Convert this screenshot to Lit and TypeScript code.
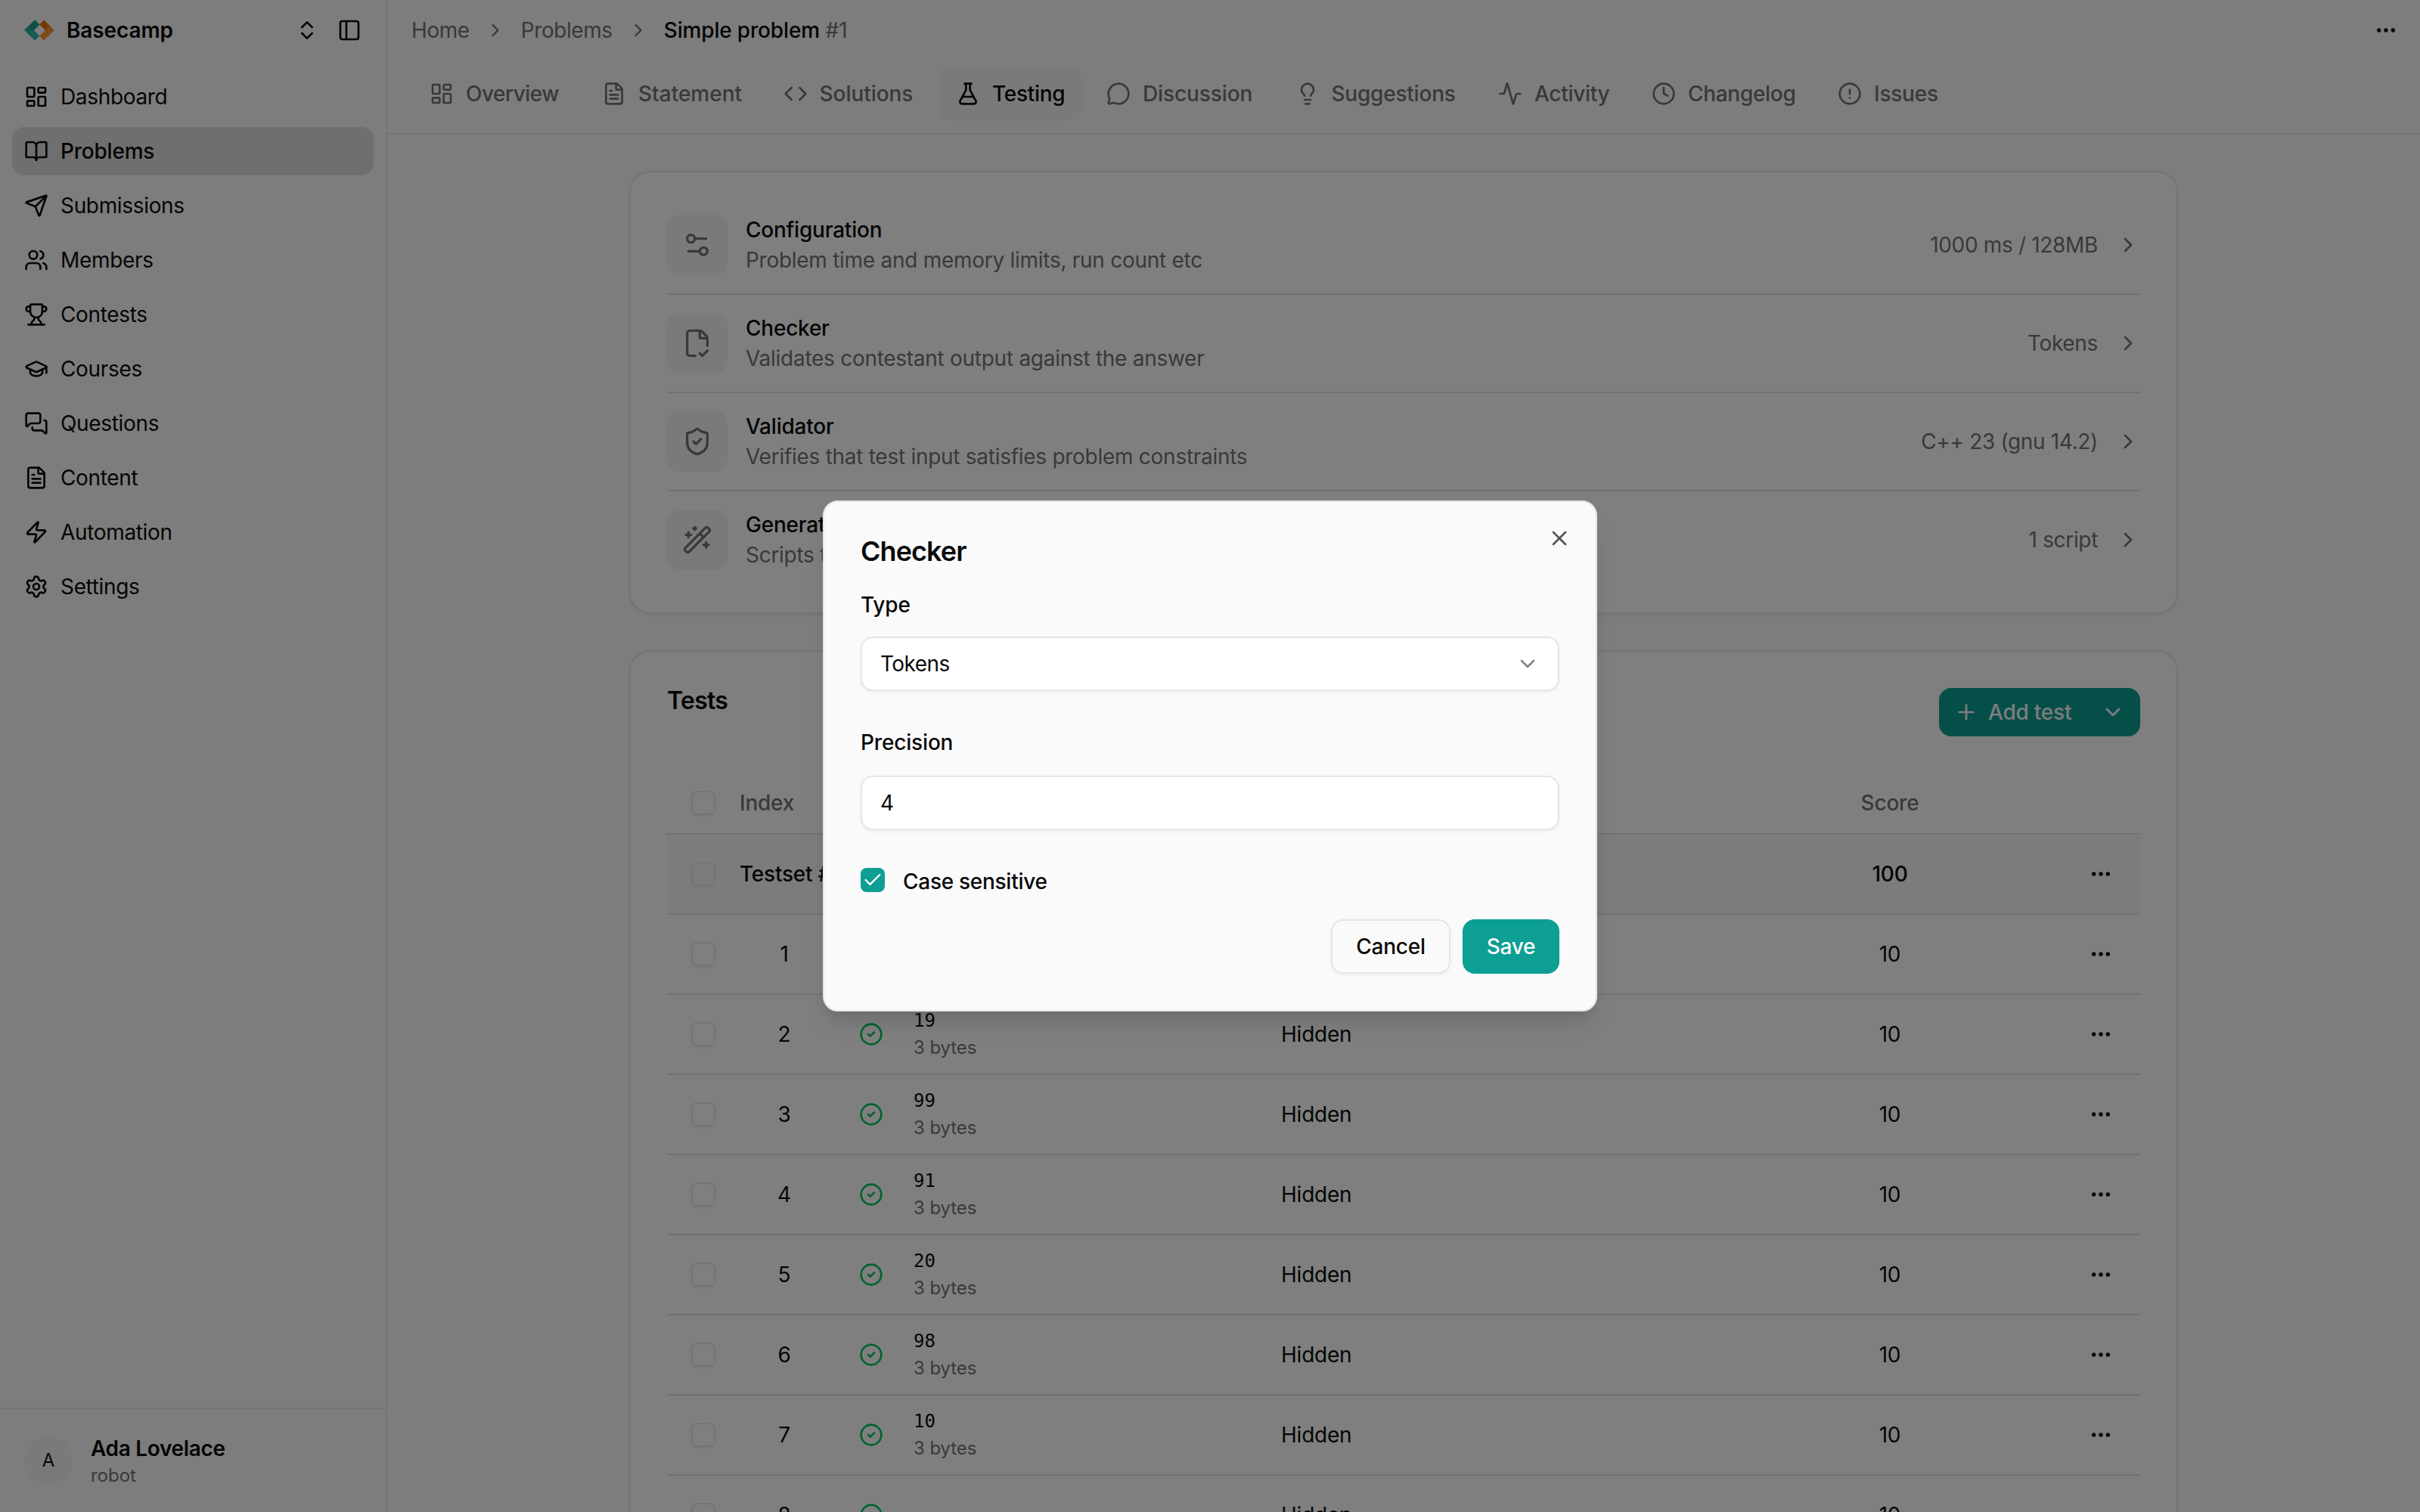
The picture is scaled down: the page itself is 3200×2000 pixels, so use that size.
import { LitElement, html, svg, css, nothing } from "lit";
import { customElement, property } from "lit/decorators.js";
import { classMap } from "lit/directives/class-map.js";

type Shape = string | [number, number, number] | [number, number, number, number, number];

/* A string is a path, three numbers a circle (cx, cy, r), five a rect (x, y, w, h, rx). */
const ICONS: Record<string, Shape[]> = {
  dashboard: [[3, 3, 7, 9, 1], [14, 3, 7, 5, 1], [14, 12, 7, 9, 1], [3, 16, 7, 5, 1]],
  book: ["M12 7v14", "M3 18a1 1 0 0 1-1-1V4a1 1 0 0 1 1-1h5a4 4 0 0 1 4 4 4 4 0 0 1 4-4h5a1 1 0 0 1 1 1v13a1 1 0 0 1-1 1h-6a3 3 0 0 0-3 3 3 3 0 0 0-3-3z"],
  send: ["M14.536 21.686a.5.5 0 0 0 .937-.024l6.5-19a.496.496 0 0 0-.635-.635l-19 6.5a.5.5 0 0 0-.024.937l7.93 3.18a2 2 0 0 1 1.112 1.11z", "m21.854 2.147-10.94 10.939"],
  users: ["M16 21v-2a4 4 0 0 0-4-4H6a4 4 0 0 0-4 4v2", "M16 3.128a4 4 0 0 1 0 7.744", "M22 21v-2a4 4 0 0 0-3-3.87", [9, 7, 4]],
  trophy: ["M10 14.66v1.626a2 2 0 0 1-.976 1.696A5 5 0 0 0 7 21.978", "M14 14.66v1.626a2 2 0 0 0 .976 1.696A5 5 0 0 1 17 21.978", "M18 9h1.5a1 1 0 0 0 0-5H18", "M4 22h16", "M6 9a6 6 0 0 0 12 0V3a1 1 0 0 0-1-1H7a1 1 0 0 0-1 1z", "M6 9H4.5a1 1 0 0 1 0-5H6"],
  cap: ["M21.42 10.922a1 1 0 0 0-.019-1.838L12.83 5.18a2 2 0 0 0-1.66 0L2.6 9.08a1 1 0 0 0 0 1.832l8.57 3.908a2 2 0 0 0 1.66 0z", "M22 10v6", "M6 12.5V16a6 3 0 0 0 12 0v-3.5"],
  messages: ["M16 10a2 2 0 0 1-2 2H6.828a2 2 0 0 0-1.414.586l-2.202 2.202A.71.71 0 0 1 2 14.286V4a2 2 0 0 1 2-2h10a2 2 0 0 1 2 2z", "M20 9a2 2 0 0 1 2 2v10.286a.71.71 0 0 1-1.212.502l-2.202-2.202A2 2 0 0 0 17.172 19H10a2 2 0 0 1-2-2v-1"],
  file: ["M6 22a2 2 0 0 1-2-2V4a2 2 0 0 1 2-2h8a2.4 2.4 0 0 1 1.704.706l3.588 3.588A2.4 2.4 0 0 1 20 8v12a2 2 0 0 1-2 2z", "M14 2v5a1 1 0 0 0 1 1h5", "M10 9H8", "M16 13H8", "M16 17H8"],
  zap: ["M4 14a1 1 0 0 1-.78-1.63l9.9-10.2a.5.5 0 0 1 .86.46l-1.92 6.02A1 1 0 0 0 13 10h7a1 1 0 0 1 .78 1.63l-9.9 10.2a.5.5 0 0 1-.86-.46l1.92-6.02A1 1 0 0 0 11 14z"],
  settings: ["M9.671 4.136a2.34 2.34 0 0 1 4.659 0 2.34 2.34 0 0 0 3.319 1.915 2.34 2.34 0 0 1 2.33 4.033 2.34 2.34 0 0 0 0 3.831 2.34 2.34 0 0 1-2.33 4.033 2.34 2.34 0 0 0-3.319 1.915 2.34 2.34 0 0 1-4.659 0 2.34 2.34 0 0 0-3.32-1.915 2.34 2.34 0 0 1-2.33-4.033 2.34 2.34 0 0 0 0-3.831A2.34 2.34 0 0 1 6.35 6.051a2.34 2.34 0 0 0 3.319-1.915", [12, 12, 3]],
  updown: ["m7 15 5 5 5-5", "m7 9 5-5 5 5"],
  panel: [[3, 3, 18, 18, 2], "M9 3v18"],
  right: ["m9 18 6-6-6-6"],
  down: ["m6 9 6 6 6-6"],
  code: ["m16 18 6-6-6-6", "m8 6-6 6 6 6"],
  flask: ["M14 2v6a2 2 0 0 0 .245.96l5.51 10.08A2 2 0 0 1 18 22H6a2 2 0 0 1-1.755-2.96l5.51-10.08A2 2 0 0 0 10 8V2", "M6.453 15h11.094", "M8.5 2h7"],
  bubble: ["M2.992 16.342a2 2 0 0 1 .094 1.167l-1.065 3.29a1 1 0 0 0 1.236 1.168l3.413-.998a2 2 0 0 1 1.099.092 10 10 0 1 0-4.777-4.719"],
  bulb: ["M15 14c.2-1 .7-1.7 1.5-2.5 1-.9 1.5-2.2 1.5-3.5A6 6 0 0 0 6 8c0 1 .2 2.2 1.5 3.5.7.7 1.3 1.5 1.5 2.5", "M9 18h6", "M10 22h4"],
  activity: ["M22 12h-2.48a2 2 0 0 0-1.93 1.46l-2.35 8.36a.25.25 0 0 1-.48 0L9.24 2.18a.25.25 0 0 0-.48 0l-2.35 8.36A2 2 0 0 1 4.49 12H2"],
  clock: [[12, 12, 10], "M12 6v6l4 2"],
  alert: [[12, 12, 10], "M12 8v4", "M12 16h.01"],
  sliders: ["M14 17H5", "M19 7h-9", [17, 17, 3], [7, 7, 3]],
  filecheck: ["M10.5 22H6a2 2 0 0 1-2-2V4a2 2 0 0 1 2-2h8a2.4 2.4 0 0 1 1.706.706l3.588 3.588A2.4 2.4 0 0 1 20 8v6", "M14 2v5a1 1 0 0 0 1 1h5", "m14 20 2 2 4-4"],
  shield: ["M20 13c0 5-3.5 7.5-7.66 8.95a1 1 0 0 1-.67-.01C7.5 20.5 4 18 4 13V6a1 1 0 0 1 1-1c2 0 4.5-1.2 6.24-2.72a1.17 1.17 0 0 1 1.52 0C14.51 3.81 17 5 19 5a1 1 0 0 1 1 1z", "m9 12 2 2 4-4"],
  wand: ["m21.64 3.64-1.28-1.28a1.21 1.21 0 0 0-1.72 0L2.36 18.64a1.21 1.21 0 0 0 0 1.72l1.28 1.28a1.2 1.2 0 0 0 1.72 0L21.64 5.36a1.2 1.2 0 0 0 0-1.72", "m14 7 3 3", "M5 6v4", "M19 14v4", "M10 2v2", "M7 8H3", "M21 16h-4", "M11 3H9"],
  plus: ["M5 12h14", "M12 5v14"],
  dots: [[12, 12, 1], [19, 12, 1], [5, 12, 1]],
  ok: [[12, 12, 10], "m9 12 2 2 4-4"],
  check: ["M20 6 9 17l-5-5"],
  close: ["M18 6 6 18", "m6 6 12 12"],
};

@customElement("ui-icon")
export class UiIcon extends LitElement {
  @property() name = "";
  static styles = css`
    :host { display: block; flex: none; width: 32px; height: 32px; }
    svg { display: block; width: 100%; height: 100%; }
  `;
  render() {
    return html`<svg viewBox="0 0 24 24" fill="none" stroke="currentColor" stroke-width="2" stroke-linecap="round" stroke-linejoin="round">
      ${(ICONS[this.name] ?? []).map((s) =>
        typeof s === "string"
          ? svg`<path d=${s}></path>`
          : s.length === 3
            ? svg`<circle cx=${s[0]} cy=${s[1]} r=${s[2]}></circle>`
            : svg`<rect x=${s[0]} y=${s[1]} width=${s[2]} height=${s[3]} rx=${s[4]}></rect>`
      )}
    </svg>`;
  }
}

const NAV = [
  ["dashboard", "Dashboard"], ["book", "Problems"], ["send", "Submissions"], ["users", "Members"],
  ["trophy", "Contests"], ["cap", "Courses"], ["messages", "Questions"], ["file", "Content"],
  ["zap", "Automation"], ["settings", "Settings"],
];

/* icon, label, label width, tracking in em */
const TABS: [string, string, number, number][] = [
  ["dashboard", "Overview", 124, -0.018], ["file", "Statement", 135.5, 0], ["code", "Solutions", 124.5, -0.002],
  ["flask", "Testing", 95, -0.011], ["bubble", "Discussion", 145.5, -0.004], ["bulb", "Suggestions", 164.5, -0.008],
  ["activity", "Activity", 99, -0.011], ["clock", "Changelog", 142, -0.011], ["alert", "Issues", 86, -0.008],
];

const SETTINGS = [
  ["sliders", "Configuration", "Problem time and memory limits, run count etc", "1000 ms / 128MB"],
  ["filecheck", "Checker", "Validates contestant output against the answer", "Tokens"],
  ["shield", "Validator", "Verifies that test input satisfies problem constraints", "C++ 23 (gnu 14.2)"],
  ["wand", "Generators", "Scripts that generate tests", "1 script"],
];

/* First line of each test; null while it has none to show. */
const TESTS: (string | null)[] = [null, "19", "99", "91", "20", "98", "10", ""];

@customElement("app-root")
export class AppRoot extends LitElement {
  static styles = css`
    :host {
      display: block; position: relative; width: 3200px; height: 2000px; overflow: hidden;
      font: 400 28px/40px Inter, "Liberation Sans", sans-serif; letter-spacing: -0.008em;
      color: #0a0a0a; background: #fafafa;
    }
    * { box-sizing: border-box; }
    .shell { display: flex; height: 2000px; }

    .side { width: 512px; flex: none; border-right: 2px solid #ebebeb; display: flex; flex-direction: column; }
    .brand { height: 80px; padding: 0 32px; display: flex; align-items: center; flex: none; }
    .logo { width: 40px; height: 28px; display: block; }
    .brand-name { font-weight: 600; margin-left: 16px; flex: 1; letter-spacing: -0.004em; }
    .toggle { margin-left: 24px; }
    .nav { flex: 1; padding: 16px; display: flex; flex-direction: column; gap: 8px; letter-spacing: -0.012em; }
    .item { height: 64px; padding: 0 16px; display: flex; align-items: center; gap: 16px; border-radius: 16px; }
    .item.on { background: #dedede; font-weight: 500; letter-spacing: -0.008em; }
    .user { height: 138px; border-top: 2px solid #ebebeb; padding: 0 32px; display: flex; align-items: center; gap: 24px; flex: none; }
    .avatar { width: 64px; height: 64px; border-radius: 50%; background: #f5f5f5; font-size: 24px; display: flex; align-items: center; justify-content: center; }
    .who { line-height: 36px; padding-top: 4px; }
    .who-name { font-weight: 600; letter-spacing: -0.012em; }
    .who-role { font-size: 24px; color: #737373; letter-spacing: -0.001em; }

    .main { flex: 1; min-width: 0; display: flex; flex-direction: column; }
    .top { height: 178px; flex: none; border-bottom: 2px solid #e8e8e8; display: flex; flex-direction: column; }
    .crumbs { height: 80px; padding: 0 29px 0 32px; display: flex; align-items: center; gap: 20px; color: #737373; letter-spacing: -0.015em; }
    .crumbs .sep { width: 28px; height: 28px; }
    .here { flex: 1; white-space: pre; letter-spacing: -0.006em; }
    .here b { font-weight: 500; color: #0a0a0a; }
    .more { color: #0a0a0a; }
    .tabs { padding: 8px 32px 0; display: flex; gap: 8px; }
    .tab { height: 72px; padding: 0 24px; display: flex; align-items: center; gap: 16px; border-radius: 16px; color: #737373; font-weight: 500; white-space: nowrap; }
    .tab.on { background: #f5f5f5; color: #0a0a0a; }

    .body { width: 2048px; margin: 48px auto 0; display: flex; flex-direction: column; gap: 48px; }
    .card { background: #fff; border: 2px solid #e8e8e8; border-radius: 28px; box-shadow: 0 2px 4px rgba(0, 0, 0, 0.06); flex: none; }
    .settings { padding: 32px 48px; }
    .setting { height: 130px; border-bottom: 2px solid #e5e5e5; display: flex; align-items: center; gap: 24px; }
    .setting:last-child { height: 128px; border-bottom: 0; }
    .tile { width: 80px; height: 80px; border-radius: 16px; background: #f5f5f5; color: #737373; display: flex; align-items: center; justify-content: center; }
    .tile ui-icon { width: 40px; height: 40px; }
    .about { flex: 1; }
    .name { font-weight: 500; letter-spacing: -0.008em; }
    .muted { color: #737373; letter-spacing: -0.0098em; }
    .setting > .muted { letter-spacing: -0.012em; }
    .setting > ui-icon { color: #737373; }

    .tests { padding: 48px; }
    .head { height: 64px; display: flex; justify-content: space-between; margin-bottom: 48px; }
    .head-title { font-size: 32px; line-height: 34px; font-weight: 600; letter-spacing: -0.022em; }
    .add { height: 64px; background: #0d9f93; color: #fafafa; border-radius: 16px; display: flex; align-items: center; padding: 0 20px; font-weight: 500; width: 266px; }
    .add-label { margin-left: 13px; flex: 1; }
    .row { display: grid; grid-template-columns: 96px 118px 112px 486px 705px 200px 1fr; align-items: center; height: 106px; border-bottom: 2px solid #e5e5e5; }
    .row.heading { height: 82px; color: #737373; font-weight: 500; }
    .row.group { background: #f9f9f9; font-weight: 500; }
    .box { width: 32px; height: 32px; margin-left: 32px; border: 2px solid #e8e8e8; border-radius: 8px; box-shadow: 0 2px 4px rgba(0, 0, 0, 0.05); }
    .label { white-space: nowrap; letter-spacing: -0.008em; }
    .center { text-align: center; }
    .passed { color: #00c758; margin-left: 40px; }
    .data { display: flex; flex-direction: column; gap: 4px; font-size: 24px; line-height: 32px; }
    .value { font-family: "DejaVu Sans Mono", "Liberation Mono", monospace; letter-spacing: 0; }
    .size { color: #737373; letter-spacing: -0.004em; }
    .act { margin-left: auto; margin-right: 36px; }

    .overlay { position: absolute; inset: 0; background: rgba(0, 0, 0, 0.5); display: flex; align-items: center; justify-content: center; }
    .dialog { position: relative; width: 1024px; height: 676px; padding: 48px; border: 2px solid #e5e5e5; border-radius: 20px; background: #fafafa; box-shadow: 0 20px 30px -6px rgba(0, 0, 0, 0.12), 0 8px 12px -8px rgba(0, 0, 0, 0.12); display: flex; flex-direction: column; }
    .close { position: absolute; top: 32px; right: 32px; color: #555; }
    .title { font-size: 36px; line-height: 34px; font-weight: 600; letter-spacing: -0.026em; margin-bottom: 34px; }
    .field-label { font-weight: 500; letter-spacing: -0.006em; margin-bottom: 22px; }
    .field-label.second { margin-bottom: 24px; }
    .field { height: 72px; border: 2px solid #e5e5e5; border-radius: 16px; background: #fff; padding: 0 24px; display: flex; align-items: center; justify-content: space-between; box-shadow: 0 2px 4px rgba(0, 0, 0, 0.05); margin-bottom: 48px; }
    .field span { letter-spacing: -0.02em; }
    .field ui-icon { color: #848484; }
    .case { display: flex; gap: 24px; height: 40px; margin-bottom: 30px; font-weight: 500; letter-spacing: -0.01em; }
    .checked { width: 32px; height: 32px; margin-top: 2px; border-radius: 8px; background: #0d9f93; color: #fff; display: flex; align-items: center; justify-content: center; }
    .checked ui-icon { width: 28px; height: 28px; }
    .buttons { display: flex; justify-content: flex-end; gap: 16px; }
    .btn { height: 72px; width: 158px; border: 2px solid #e5e5e5; border-radius: 16px; font-weight: 500; display: flex; align-items: center; justify-content: center; box-shadow: 0 2px 4px rgba(0, 0, 0, 0.05); }
    .btn.save { width: 128px; border: 0; background: #0d9f93; color: #fafafa; box-shadow: none; }
  `;

  private sidebar() {
    return html`<aside class="side">
      <div class="brand">
        <svg class="logo" viewBox="0 0 40 28">
          <path fill="#2ab8ab" d="M0 14 14 .6l6.4 6L12.6 14l7.8 7.4L14 27.4z"></path>
          <path fill="#1f9f94" d="M0 14 14 .6l6.4 6L12.6 14z"></path>
          <path fill="#fb9236" d="M26 .6 39.8 14 26 27.4l-5.6-6L28 14l-7.6-7.4z"></path>
          <path fill="#ee6f00" d="M26 .6l7.4 7.2L28 14l-7.6-7.4z"></path>
        </svg>
        <span class="brand-name">Basecamp</span>
        <ui-icon name="updown"></ui-icon>
        <ui-icon class="toggle" name="panel"></ui-icon>
      </div>
      <nav class="nav">
        ${NAV.map(([icon, label]) => html`<div class=${classMap({ item: true, on: label === "Problems" })}>
          <ui-icon name=${icon}></ui-icon><span>${label}</span></div>`)}
      </nav>
      <div class="user">
        <div class="avatar">A</div>
        <div class="who"><div class="who-name">Ada Lovelace</div><div class="who-role">robot</div></div>
      </div>
    </aside>`;
  }

  private header() {
    return html`<header class="top">
      <div class="crumbs">
        <span>Home</span><ui-icon class="sep" name="right"></ui-icon>
        <span>Problems</span><ui-icon class="sep" name="right"></ui-icon>
        <span class="here"><b>Simple problem</b> #1</span>
        <ui-icon class="more" name="dots"></ui-icon>
      </div>
      <div class="tabs">
        ${TABS.map(([icon, label, width, track]) => html`<div class=${classMap({ tab: true, on: label === "Testing" })}>
          <ui-icon name=${icon}></ui-icon><span style="width:${width}px;letter-spacing:${track}em">${label}</span></div>`)}
      </div>
    </header>`;
  }

  private test(value: string | null, i: number) {
    return html`<div class="row">
      <div class="box"></div>
      <div class="center">${i + 1}</div>
      <div>${value !== null ? html`<ui-icon class="passed" name="ok"></ui-icon>` : nothing}</div>
      <div class="data">${value ? html`<span class="value">${value}</span><span class="size">3 bytes</span>` : nothing}</div>
      <div>${value !== null ? "Hidden" : nothing}</div>
      <div class="center">10</div>
      <ui-icon class="act" name="dots"></ui-icon>
    </div>`;
  }

  private dialog() {
    return html`<div class="overlay">
      <div class="dialog" role="dialog">
        <ui-icon class="close" name="close"></ui-icon>
        <div class="title">Checker</div>
        <div class="field-label">Type</div>
        <div class="field"><span>Tokens</span><ui-icon name="down"></ui-icon></div>
        <div class="field-label second">Precision</div>
        <div class="field"><span>4</span></div>
        <div class="case"><div class="checked"><ui-icon name="check"></ui-icon></div><span>Case sensitive</span></div>
        <div class="buttons"><div class="btn">Cancel</div><div class="btn save">Save</div></div>
      </div>
    </div>`;
  }

  render() {
    return html`<div class="shell">
        ${this.sidebar()}
        <main class="main">
          ${this.header()}
          <div class="body">
            <section class="card settings">
              ${SETTINGS.map(([icon, name, about, value]) => html`<div class="setting">
                <div class="tile"><ui-icon name=${icon}></ui-icon></div>
                <div class="about"><div class="name">${name}</div><div class="muted">${about}</div></div>
                <span class="muted">${value}</span>
                <ui-icon name="right"></ui-icon>
              </div>`)}
            </section>
            <section class="card tests">
              <div class="head">
                <div class="head-title">Tests</div>
                <div class="add"><ui-icon name="plus"></ui-icon><span class="add-label">Add test</span><ui-icon name="down"></ui-icon></div>
              </div>
              <div class="row heading">
                <div class="box"></div><div class="label">Index</div><div></div><div></div><div></div><div class="center">Score</div><div></div>
              </div>
              <div class="row group">
                <div class="box"></div><div class="label">Testset #1</div><div></div><div></div><div></div><div class="center">100</div>
                <ui-icon class="act" name="dots"></ui-icon>
              </div>
              ${TESTS.map((v, i) => this.test(v, i))}
            </section>
          </div>
        </main>
      </div>
      ${this.dialog()}`;
  }
}
